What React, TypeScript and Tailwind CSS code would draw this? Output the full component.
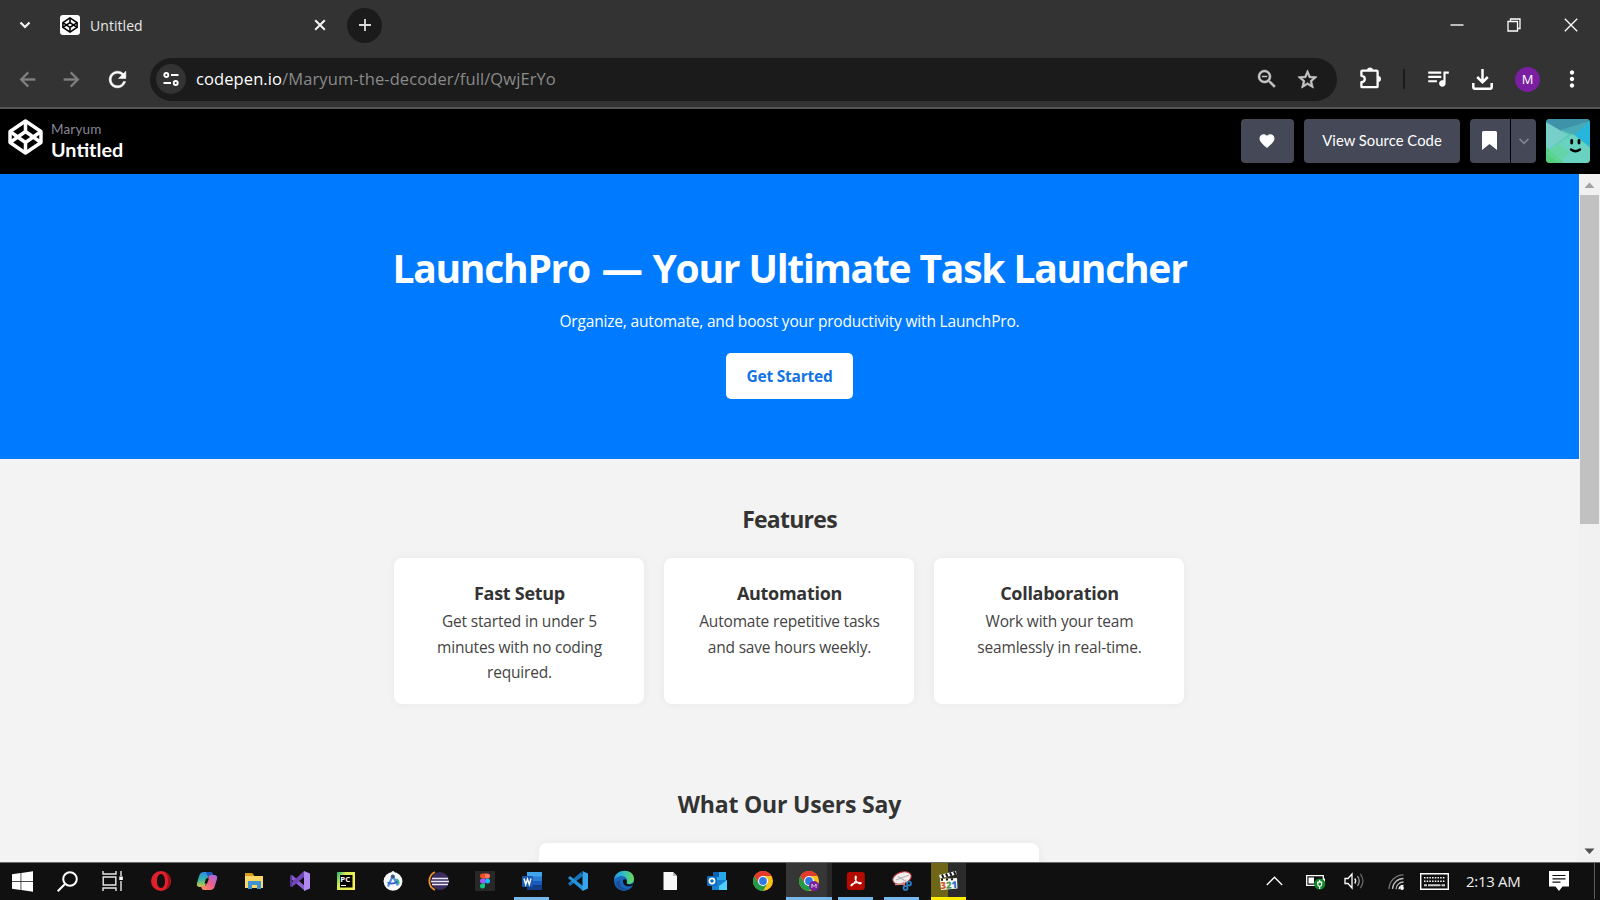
import React from "react";
import {
  MdFavorite,
  MdMoreVert,
  MdQueueMusic,
  MdRefresh,
  MdStarBorder,
  MdZoomOut,
  MdArrowBack,
  MdArrowForward,
} from "react-icons/md";

function CodepenMark({ className, stroke = 2 }: { className: string; stroke?: number }) {
  return (
    <svg className={className} viewBox="0 0 24 24" fill="none" stroke="currentColor" strokeWidth={stroke} strokeLinejoin="round" preserveAspectRatio="none">
      <path d="M12 1.4 22.6 8.4v7.2L12 22.6 1.4 15.6V8.4Z" />
      <path d="M12 22.6v-7M22.6 8.4 12 15.6 1.4 8.4M1.4 15.6 12 8.4l10.6 7.2M12 1.4v7" />
    </svg>
  );
}

function TabStrip() {
  return (
    <div className="flex h-[50px] items-center">
      <div className="flex w-[50px] justify-center">
        <svg className="h-3 w-3" viewBox="0 0 12 12" fill="none" stroke="#f5f5f5" strokeWidth="2.2"><path d="m1.5 3.5 4.5 4.5 4.500-4.500" /></svg>
      </div>
      <div className="ml-[10px] flex h-5 w-5 items-center justify-center rounded-[3px] bg-white text-black">
        <CodepenMark className="h-4 w-4" stroke={2.4} />
      </div>
      <span className="ml-[10px] w-[223px] pt-[2px] text-[14px] leading-5 tracking-[0.05px] text-[#e8e8e8]">Untitled</span>
      <svg className="h-[14px] w-[14px]" viewBox="0 0 14 14" stroke="#f5f5f5" strokeWidth="2"><path d="m2.200 2.200 9.600 9.600m0-9.600L2.200 11.800" /></svg>
      <div className="ml-[20px] flex h-[35px] w-[35px] items-center justify-center rounded-full bg-[#1b1b1b]">
        <svg className="h-[14px] w-[14px]" viewBox="0 0 14 14" stroke="#dcdcdc" strokeWidth="1.8"><path d="M7 1v12M1 7h12" /></svg>
      </div>
      <div className="ml-auto mr-[22px] flex items-center gap-[43px]">
        <svg className="h-[14px] w-[14px]" viewBox="0 0 14 14" stroke="#e0e0e0" strokeWidth="1.600"><path d="M.5 7h13" /></svg>
        <svg className="h-[14px] w-[14px]" viewBox="0 0 14 14" stroke="#fff" strokeWidth="1.300" fill="none"><path d="M1 3.500h9.500V13H1zM3.500 3.500V1H13v9.500h-2.500" /></svg>
        <svg className="h-[14px] w-[14px]" viewBox="0 0 14 14" stroke="#fff" strokeWidth="1.300"><path d="m.8.8 12.400 12.400m0-12.400L.8 13.200" /></svg>
      </div>
    </div>
  );
}

function Toolbar() {
  return (
    <div className="flex h-[57px] items-center pt-[1px]">
      <div className="flex w-[150px] items-center">
        <MdArrowBack className="ml-[16px] h-[23px] w-[23px] stroke-[#828282] stroke-[0.4px] text-[#828282] [&>path:first-child]:stroke-none" />
        <MdArrowForward className="ml-[21px] h-[23px] w-[23px] stroke-[#828282] stroke-[0.4px] text-[#828282] [&>path:first-child]:stroke-none" />
        <MdRefresh className="ml-[22px] h-[25px] w-[25px] stroke-white stroke-[0.5px] text-white [&>path:first-child]:stroke-none" />
      </div>
      <div className="flex h-[43px] w-[1187px] items-center rounded-full bg-[#1b1b1b] pl-[6px] pr-[18px]">
        <div className="flex h-[30px] w-[30px] items-center justify-center rounded-full bg-[#333]">
          <svg className="h-4 w-4" viewBox="0 0 16 16" fill="none" stroke="#fff" strokeWidth="1.900"><circle cx="3.300" cy="4" r="2" /><path d="M8 4h7.500M.5 12H8" /><circle cx="12.700" cy="12" r="2" /></svg>
        </div>
        <span className="ml-[10px] text-[16.5px] leading-6 tracking-[0.1px] text-[#8a8a8a]"><span className="text-white">codepen.io</span>/Maryum-the-decoder/full/QwjErYo</span>
        <MdZoomOut className="ml-auto h-[24px] w-[24px] stroke-[#c7c7c7] stroke-[0.5px] text-[#c7c7c7] [&>path:first-child]:stroke-none" />
        <MdStarBorder className="ml-[17px] h-[23px] w-[23px] stroke-[#c7c7c7] stroke-[0.7px] text-[#c7c7c7] [&>path:first-child]:stroke-none" />
      </div>
      <svg className="mb-[3px] ml-[23px] h-[22px] w-[22px]" viewBox="0 0 22 22" fill="none" stroke="#fff" strokeWidth="2.300" strokeLinejoin="round">
        <path d="M2.200 3.700h14.600q.800 0 .800.800v14.900q0 .800-.800.800H2.200q-.800 0-.800-.800v-4.200q3.400-.300 3.400-3.200T1.400 8.800V4.500q0-.800.800-.800Z" />
        <path fill="#fff" stroke="none" d="M7 3.500a3 3 0 0 1 6 0ZM18 9a3 3 0 0 1 0 6Z" />
      </svg>
      <div className="ml-[21px] h-5 w-[2px] bg-[#1b1b1b]" />
      <MdQueueMusic className="mb-[2px] ml-[20px] h-[26px] w-[26px] text-white" />
      <svg className="ml-[21px] h-[21px] w-[21px]" viewBox="0 0 21 21" fill="none" stroke="#fff" strokeWidth="2.500"><path d="M10.500 0v13M5.200 8l5.300 5.300L15.800 8M1.300 14v4q0 1.700 1.700 1.700h15q1.700 0 1.700-1.700v-4" /></svg>
      <div className="ml-[22px] flex h-[25px] w-[25px] items-center justify-center rounded-full bg-[#7b1fa2] text-[13px] leading-none text-white">M</div>
      <MdMoreVert className="ml-[19px] h-[26px] w-[26px] text-white" />
    </div>
  );
}

function PenHeader() {
  return (
    <header className="flex h-[65px] items-center bg-black pb-[2px] pl-[8px] pr-[10px] font-['Lato',sans-serif]">
      <CodepenMark className="mb-[8px] h-[36px] w-[35px] text-white" stroke={2.4} />
      <div className="ml-[8px] flex flex-col">
        <span className="text-[13.5px] leading-[18px] tracking-[0.15px] text-[#868894]">Maryum</span>
        <span className="text-[19.8px] font-bold leading-[23px] text-white">Untitled</span>
      </div>
      <div className="ml-auto flex h-[44px] text-white">
        <div className="flex w-[53px] items-center justify-center rounded bg-[#444857] pr-px"><MdFavorite className="h-[18px] w-[18px]" /></div>
        <div className="ml-[10px] flex w-[156px] items-center justify-center rounded bg-[#444857] text-[14.8px] tracking-[0.04px]">View Source Code</div>
        <div className="ml-[10px] flex w-[40px] items-center justify-center rounded-l bg-[#444857] pr-px">
          <svg className="h-[19px] w-[15px]" viewBox="0 0 15 19" fill="#fff"><path d="M0 1.500Q0 0 1.500 0h12Q15 0 15 1.500V19l-7.500-6L0 19Z" /></svg>
        </div>
        <div className="ml-px flex w-[25px] items-center justify-center rounded-r bg-[#444857]">
          <svg className="h-[12px] w-[12px]" viewBox="0 0 12 12" fill="none" stroke="#868894" strokeWidth="1.600"><path d="m1.500 3.800 4.500 4.500 4.500-4.500" /></svg>
        </div>
        <svg className="ml-[10px] h-[44px] w-[44px] rounded" viewBox="0 0 44 44">
          <path fill="#5cc8b4" d="M0 0h44v44H0z" />
          <path fill="#3f93a8" d="M0 0h44v3L14 12 0 4Z" />
          <path fill="#77cfc9" d="M0 3 22 16 0 32Z" />
          <path fill="#27b5dc" d="M44 2v26L27 15Z" />
          <path fill="#49a9b4" d="M14 11 44 2 28 16Z" />
          <path fill="#6fd6c4" d="m0 32 27-17 17 14v15H16Z" opacity=".75" />
          <path fill="#52cf7c" d="m0 28 18 16H0Z" />
          <path fill="#62d39a" d="M12 25 24 33 12 44 0 34Z" opacity=".7" />
          <rect x="24.300" y="20" width="2.800" height="5.500" rx="1.400" /><rect x="31.600" y="20" width="2.800" height="5.500" rx="1.400" />
          <path d="M25 30.500q4.500 3.500 9 0" fill="none" stroke="#000" strokeWidth="2.400" strokeLinecap="round" />
        </svg>
      </div>
    </header>
  );
}

const features = [
  { title: "Fast Setup", text: "Get started in under 5 minutes with no coding required." },
  { title: "Automation", text: "Automate repetitive tasks and save hours weekly." },
  { title: "Collaboration", text: "Work with your team seamlessly in real-time." },
];

function LandingPage() {
  return (
    <main className="w-[1579px] overflow-hidden bg-[#f3f3f3] text-center text-[#333]">
      <section className="flex h-[285px] flex-col items-center bg-[#007bff] pt-[67px] text-white">
        <h1 className="flex items-center gap-[11.5px] text-[39px] font-bold leading-[54px] tracking-[-1.26px] [word-spacing:0.3px]">
          <span>LaunchPro</span><span className="w-[39.500px] text-[41.500px] leading-[54px]">—</span><span>Your Ultimate Task Launcher</span>
        </h1>
        <p className="mt-[13px] text-[15.5px] leading-[26px] tracking-[-0.18px]">Organize, automate, and boost your productivity with LaunchPro.</p>
        <button className="mt-[19px] h-[46px] w-[127px] rounded-[5px] bg-white pt-[2px] text-[15.5px] font-bold tracking-[-0.23px] text-[#1273e6]">Get Started</button>
      </section>
      <section className="flex h-[327px] flex-col items-center pr-px pt-[42px]">
        <h2 className="pl-px text-[23px] font-bold leading-9 tracking-[-0.75px]">Features</h2>
        <div className="mt-[21px] flex gap-5">
          {features.map((f) => (
            <article key={f.title} className="h-[146px] w-[250px] rounded-lg bg-white pl-[31px] pr-[30px] pt-[21px] shadow-[0_0_10px_rgba(0,0,0,0.05)]">
              <h3 className="text-[18px] font-bold leading-7 tracking-[-0.28px]">{f.title}</h3>
              <p className="mt-[2px] text-[15.5px] leading-[25.5px] tracking-[-0.18px] text-[#444]">{f.text}</p>
            </article>
          ))}
        </div>
      </section>
      <section className="flex flex-col items-center pr-px">
        <h2 className="pl-px text-[23px] font-bold leading-9 tracking-[-0.2px]">What Our Users Say</h2>
        <article className="mt-[21px] h-[120px] w-[500px] rounded-lg bg-white shadow-[0_0_10px_rgba(0,0,0,0.05)]" />
      </section>
    </main>
  );
}

function Scrollbar() {
  return (
    <div className="flex w-[21px] flex-col items-center bg-[#f1f1f1]">
      <svg className="h-[21px] w-[21px]" viewBox="0 0 21 21" fill="#a3a3a3"><path d="m10.500 8.500 5 5.500h-10Z" /></svg>
      <div className="h-[329px] w-[19px] bg-[#c1c1c1]" />
      <svg className="mt-auto h-[21px] w-[21px]" viewBox="0 0 21 21" fill="#505050"><path d="m10.500 13 5-5.500h-10Z" /></svg>
    </div>
  );
}

function Chrome({ badge = false }: { badge?: boolean }) {
  return (
    <svg className="h-5 w-5 overflow-visible" viewBox="0 0 20 20">
      <circle cx="10" cy="10" r="10" fill="#fbc116" />
      <path fill="#e33b2e" d="M1.340 5A10 10 0 0 1 18.660 5H10L5.670 12.500Z" />
      <path fill="#229a4a" d="M1.340 5A10 10 0 0 0 10 20l4.330-7.500H5.670Z" />
      <circle cx="10" cy="10" r="5" fill="#fff" />
      <circle cx="10" cy="10" r="3.900" fill="#2f78e6" />
      {badge && <><circle cx="15" cy="15" r="5" fill="#7b1fa2" /><path d="M12.900 17v-4l2.100 2.600 2.100-2.600v4" fill="none" stroke="#ddd" strokeWidth=".9" /></>}
    </svg>
  );
}

const s = "h-5 w-5 overflow-visible";
const apps: { name: string; cell?: string; icon: React.ReactNode }[] = [
  { name: "opera", icon: <svg className={s} viewBox="0 0 20 20"><path fillRule="evenodd" fill="#e0202b" d="M10 0a10 10 0 1 0 0 20 10 10 0 0 0 0-20Zm0 3c2.500 0 4 3 4 7s-1.500 7-4 7-4-3-4-7 1.500-7 4-7Z" /><path fill="#a3101c" d="M13 1c3 2 4 5 4 9s-1 7-4 9c9-2 9-16 0-18Z" /></svg> },
  {
    name: "copilot",
    icon: (
      <svg className={s} viewBox="0 0 20 20">
        <defs>
          <linearGradient id="cpA" x1="0" y1="0" x2="0" y2="1"><stop stopColor="#2b8be8" /><stop offset=".5" stopColor="#35b7a5" /><stop offset="1" stopColor="#d6c83c" /></linearGradient>
          <linearGradient id="cpB" x1="1" y1="0" x2="0" y2="1"><stop stopColor="#9a6bea" /><stop offset=".5" stopColor="#ec5f8d" /><stop offset="1" stopColor="#fb9c5a" /></linearGradient>
        </defs>
        <path fill="url(#cpA)" d="M7 1h6q2 0 2.500 2l.5 2h-3q-2 0-2.500 2L8.500 14q-.5 2-2.500 2H3q-4 0-3-4l2.500-8Q3.500 1 7 1Z" />
        <path fill="#1f58b8" d="M9 1h4.500q2 0 2.500 2l.8 3h-4Q11 6 10 4Z" />
        <path fill="url(#cpB)" d="M13 19H7q-2 0-2.500-2L4 15h3q2 0 2.500-2l2-7q.500-2 2.500-2h3q4 0 3 4l-2.500 8q-1 3-4.500 3Z" />
        <path fill="#111" d="m9 7.500 3 0-2 5H7.500Z" />
      </svg>
    ),
  },
  { name: "explorer", icon: <svg className={s} viewBox="0 0 20 20"><path fill="#d99a1c" d="M1 2h7l2 2v3H1z" /><path fill="#fcd667" d="M1 5h18v12H1z" /><path fill="#3f93cf" d="M4 10h13v8h-4v-4H8v4H4z" /></svg> },
  { name: "visual studio", icon: <svg className={s} viewBox="0 0 20 20"><path fill="#8a5fd0" d="m0 5 2-1 13 11V20L0 7Z" /><path fill="#6f45b8" d="m0 15 2 1L14 6V0L0 13Z" /><path fill="#b08af0" d="m14 0 6 2.500v15L14 20Z" /><path fill="#5a3698" d="M0 5h2v11l-2-1Z" /></svg> },
  {
    name: "pycharm",
    icon: (
      <svg className={s} viewBox="0 0 20 20">
        <defs><linearGradient id="pc" x1="0" y1="0" x2="1" y2=".6"><stop stopColor="#21b37c" /><stop offset=".4" stopColor="#d5ec52" /><stop offset="1" stopColor="#f6f35a" /></linearGradient></defs>
        <path fill="url(#pc)" d="M1 1h18v18H1z" /><path d="M4 4h12.500v12.500H4z" />
        <text x="4.300" y="10.800" fontSize="7.800" fontWeight="700" fill="#fff">PC</text><path fill="#fff" d="M5 14h5v1H5z" />
      </svg>
    ),
  },
  {
    name: "android studio",
    icon: (
      <svg className={s} viewBox="0 0 20 20">
        <circle cx="10" cy="10.300" r="9.400" fill="#f6f8fc" /><circle cx="10" cy="1.500" r="1.600" fill="#f6f8fc" />
        <path fill="#35b87b" d="M11.500 8c4-1 6 2 4.500 6l-4-3Z" />
        <path d="M9.500 5.500 5 15.500M10 5.500l4.800 9" fill="none" stroke="#5b8fe0" strokeWidth="2.200" /><path d="M4.500 11.500q5 2.500 10-1" fill="none" stroke="#2a62c4" strokeWidth="1.700" /><circle cx="9.800" cy="5.500" r="2" fill="#3c5878" />
      </svg>
    ),
  },
  { name: "eclipse", icon: <svg className={s} viewBox="0 0 20 20"><path d="M6 1a10 10 0 0 0 0 18" fill="none" stroke="#f0952a" strokeWidth="1.800" /><circle cx="11" cy="10" r="9" fill="#392d62" /><path d="M3 7.500h16M2 10.500h18M3 13.500h16" stroke="#ede9f4" strokeWidth="1.400" /></svg> },
  { name: "figma", icon: <svg className={s} viewBox="0 0 20 20"><rect width="20" height="20" rx="1" fill="#282828" /><path fill="#f24e1e" d="M10 2.500H7.500a2.500 2.500 0 0 0 0 5H10z" /><path fill="#ff7262" d="M10 2.500h2.500a2.500 2.500 0 0 1 0 5H10z" /><path fill="#a259ff" d="M10 7.500H7.500a2.500 2.500 0 0 0 0 5H10z" /><circle cx="12.500" cy="10" r="2.500" fill="#1abcfe" /><path fill="#0acf83" d="M10 12.500H7.500a2.500 2.500 0 1 0 2.500 2.500z" /></svg> },
  { name: "word", cell: "open", icon: <svg className={s} viewBox="0 0 20 20"><path fill="#41a5ee" d="M5 1h15v5H5z" /><path fill="#2b7cd3" d="M5 5.500h15V10H5z" /><path fill="#185abd" d="M5 10h15v4.500H5z" /><path fill="#123f8a" d="M5 14.500h15V19H5z" /><rect y="5" width="11" height="11" rx="1" fill="#1a56b4" /><path d="m2 7.500 1.700 6L5.500 8l1.800 5.500L9 7.500" fill="none" stroke="#fff" strokeWidth="1.400" /></svg> },
  { name: "vscode", icon: <svg className={s} viewBox="0 0 20 20"><path fill="#1673b8" d="M0 12.500 13 1l2 4L2 15Z" /><path fill="#2493dc" d="m0 7 2-2 13 10v5Z" /><path fill="#37a5ee" d="m14.500 0 5.500 2.500v15L14.500 20Z" /></svg> },
  {
    name: "edge",
    icon: (
      <svg className={s} viewBox="0 0 20 20">
        <defs><linearGradient id="eg" x1="0" y1=".5" x2="1" y2=".5"><stop stopColor="#2295da" /><stop offset=".5" stopColor="#32bfc4" /><stop offset="1" stopColor="#6edb4f" /></linearGradient></defs>
        <circle cx="10" cy="10" r="10" fill="#1767ba" /><path fill="#1b4f9c" d="M6 9c-1 8 5 10 11 8-4 4-15 3-15-6Z" />
        <path fill="url(#eg)" d="M0 9C1-3 20-3 20 8c0 5-6 6-8 4 4-5-4-9-8-6Q1 7 0 9Z" /><path fill="#111" d="M9 10c0 5 5 7 10 4l1.500 1V11c-2 3-6 3-8 1.500q1-1.500 0-3.500C10.500 7.500 9 8.500 9 10Z" />
      </svg>
    ),
  },
  { name: "document", icon: <svg className={s} viewBox="0 0 20 20"><path fill="#f8f8f8" d="M3.500 1H13l4 4v14H3.500z" /><path fill="#b8b8b8" d="M13 1v4h4z" /></svg> },
  { name: "outlook", icon: <svg className={s} viewBox="0 0 20 20"><path fill="#28a8ea" d="M6 1h13v9H6z" /><path fill="#0f5fad" d="M6 1h6v5H6z" /><path fill="#167fd0" d="M5 9h15v10H5z" /><path fill="#50d0ff" d="m20 9-8 6v4h8z" /><rect x="0" y="5" width="10" height="10" rx="1" fill="#0f6cbd" /><circle cx="5" cy="10" r="2.600" fill="none" stroke="#fff" strokeWidth="1.600" /></svg> },
  { name: "chrome", icon: <Chrome /> },
  { name: "chrome profile", cell: "active", icon: <Chrome badge /> },
  { name: "acrobat", cell: "open", icon: <svg className={s} viewBox="0 0 20 20"><rect x=".8" y="1" width="18" height="18" rx="3" fill="#b30b00" /><path d="M9.600 5c1 0 .8 3-.6 5.500S5.500 15.500 5 14.500 9 11.500 12 11.300s4 1 2.500 1.500-6-3-5.300-6.300Q9.200 5 9.600 5Z" fill="none" stroke="#fff" strokeWidth="1.200" /></svg> },
  { name: "snipping tool", cell: "open", icon: <svg className={s} viewBox="0 0 20 20"><ellipse cx="10" cy="7" rx="9.500" ry="5.800" transform="rotate(-18 10 7)" fill="#f2eeee" stroke="#c43c40" strokeWidth="1" /><path d="m4 9 13-5M6 5.500l8 5" stroke="#b9b3b3" strokeWidth="1.200" /><path d="m3 13.500 10-.500m-2-2 2 5" stroke="#d88" strokeWidth="1.500" /><circle cx="17" cy="12.500" r="2" fill="none" stroke="#2b83cc" strokeWidth="1.700" /><circle cx="13.500" cy="17" r="2" fill="none" stroke="#2b83cc" strokeWidth="1.700" /></svg> },
  { name: "clapper", cell: "alert", icon: <svg className={s} viewBox="0 0 20 20"><path fill="#f7f7f5" d="m2 8 17-1 .5 10.500L3 19Z" /><path fill="#f5f5f5" d="m1 4 17-4 .5 3.500L2 7.500Z" /><path stroke="#151515" strokeWidth="1.900" d="m4 3.500 1.500 3.300M8 2.500l1.500 3.300M12 1.500l1.500 3.300M16 .500l1.500 3.300M3 8.800l2 0M8 8.500h2M13 8.300h2" /><text x="2.400" y="17.500" fontSize="9.500" fontWeight="800" transform="rotate(-4 10 14)"><tspan fill="#d3552a">3</tspan><tspan fill="#3f9a48">2</tspan><tspan fill="#2f6fc0">1</tspan></text></svg> },
];

function AppCell({ cell, children }: { cell?: string; children: React.ReactNode }) {
  if (cell === "active")
    return <div className="flex h-full w-[46.3px] border-b-[3px] border-[#76b9ed]"><div className="flex w-[41px] items-center justify-center bg-[#363636] pl-[5px] pt-[1px]">{children}</div><div className="flex-1 bg-[#272727]" /></div>;
  if (cell === "alert")
    return <div className="flex h-full w-[46.3px] justify-center"><div className="flex w-[35px] items-center justify-center border-b-[3px] border-[#ffee00] bg-[linear-gradient(90deg,#6f6618_0_17px,#2b2b2b_17px)] pt-[1px]">{children}</div></div>;
  if (cell === "open")
    return <div className="flex h-full w-[46.3px] justify-center"><div className="flex w-[35px] items-center justify-center border-b-[3px] border-[#76b9ed] pt-[1px]">{children}</div></div>;
  return <div className="flex h-full w-[46.3px] items-center justify-center pb-[2px]">{children}</div>;
}

function Taskbar() {
  return (
    <footer className="flex h-[38px] items-center border-t border-[#6b6b6b] bg-[#101010]">
      <div className="flex w-[45px] justify-center pb-[1px]"><svg className="h-[21px] w-[21px]" viewBox="0 0 21 21" fill="#fff"><path d="M0 3.200 8.600 2v8H0zM9.300 1.900 21 .300V10H9.300zM0 10.800h8.600v8.100L0 17.800zM9.300 10.800H21v9.900L9.300 19.100z" /></svg></div>
      <div className="flex w-[45px] justify-center pb-[1px]"><svg className="h-[21px] w-[21px]" viewBox="0 0 21 21" fill="none" stroke="#fff" strokeWidth="2"><circle cx="13" cy="8" r="6.800" /><path d="m8 13-7.300 7.300" /></svg></div>
      <div className="flex w-[48px] justify-center pb-[1px] pr-[2px]"><svg className="h-[20px] w-[22px]" viewBox="0 0 22 20" fill="none" stroke="#e8e8e8" strokeWidth="1.400"><path d="M1 0v3h13V0M1.200 6h12.600v8H1.200zM1 20v-3h13v3M19 0v5M19 10v10" /><rect x="17.300" y="5.500" width="3.500" height="3.500" fill="#fff" stroke="none" /></svg></div>
      {apps.map((a) => <AppCell key={a.name} cell={a.cell}>{a.icon}</AppCell>)}
      <div className="ml-auto flex h-full items-center pb-[1px]">
        <svg className="h-[10px] w-[17px]" viewBox="0 0 17 10" fill="none" stroke="#fff" strokeWidth="1.300"><path d="m.8 9 7.700-7.800L16.200 9" /></svg>
        <svg className="ml-[23px] h-[17px] w-[20px]" viewBox="0 0 20 17"><path d="M.7 2.700h16.600v9.600H.7z" fill="none" stroke="#fff" strokeWidth="1.300" /><path fill="#fff" d="M2.500 4.500H8v6H2.500zM17.500 5.500H19v4h-1.500z" /><circle cx="13.700" cy="11" r="5.600" fill="#12842b" /><path d="M13.700 7v1.500m0 5V16M11.800 9.200h3.800v2.300q0 1.800-1.900 1.800t-1.900-1.800Z" fill="none" stroke="#fff" strokeWidth="1.200" /></svg>
        <svg className="ml-[18px] h-[18px] w-[21px]" viewBox="0 0 21 18" fill="none" stroke="#fff" strokeWidth="1.300"><path d="M1 6.500h3l4-4.500v14l-4-4.500H1z" /><path d="M10.800 6.500q1.800 2.500 0 5" /><path stroke="#999" d="M13.500 4.200q3.500 4.800 0 9.600" /><path stroke="#666" d="M16.300 1.800q5.400 7.200 0 14.400" /></svg>
        <svg className="ml-[23px] mt-[2px] h-[16px] w-[16px]" viewBox="0 0 16 16" fill="none" stroke="#bbb" strokeWidth="1.300"><path stroke="#777" d="M1 15A14.500 14.500 0 0 1 15.500.8" /><path d="M4.500 15A11 11 0 0 1 15.500 4.500M8 15.300A7.500 7.500 0 0 1 15.500 8" /><path stroke="#fff" d="M11 15.300a4.500 4.500 0 0 1 4.500-4" /><circle cx="14" cy="14" r="1.900" fill="#fff" stroke="none" /></svg>
        <svg className="ml-[16px] h-[17px] w-[29px]" viewBox="0 0 29 17" fill="none" stroke="#fff"><path strokeWidth="1.400" d="M.7.700h27.600v15.600H.7z" /><path strokeWidth="1.500" strokeDasharray="1.500 1.200" d="M4 4.700h21.500M4 8.200h21.500" /><path stroke="#ccc" strokeWidth="2" d="M4 12.200h3m1 0h12.500m1 0h3.500" /></svg>
        <span className="ml-[17px] w-[56px] whitespace-nowrap text-[15px] leading-5 tracking-[-0.3px] text-[#eee]">2:13 AM</span>
        <svg className="ml-[27px] h-[20px] w-[20px]" viewBox="0 0 20 20"><path fill="#fff" d="M0 0h20v15.500h-6.500L10 20l-3.500-4.500H0z" /><path stroke="#111" strokeWidth="1.200" d="M3.500 4.500h13M3.500 7.800h13M3.500 11.200h8" /></svg>
        <div className="ml-[25px] h-full w-px bg-[#5a5a5a]" />
        <div className="w-[5px]" />
      </div>
    </footer>
  );
}

export default function App() {
  return (
    <div className="flex h-[900px] w-[1600px] flex-col overflow-hidden bg-[#333] font-['Open_Sans','Noto_Sans',sans-serif]">
      <TabStrip />
      <Toolbar />
      <div className="h-[2px] bg-[#555]" />
      <PenHeader />
      <div className="flex h-[688px]">
        <LandingPage />
        <Scrollbar />
      </div>
      <Taskbar />
    </div>
  );
}
